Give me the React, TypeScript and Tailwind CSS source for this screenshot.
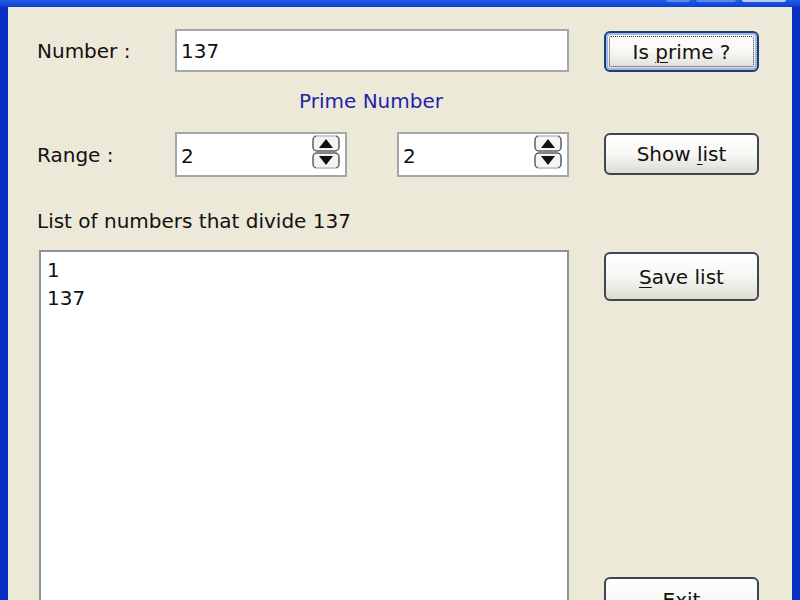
import type { ReactNode } from "react";

// XP-style "prime number" dialog, scaled up.

const FONT = { fontFamily: '"DejaVu Sans", Verdana, sans-serif' };

function XpButton({
  children,
  focused,
  className,
}: {
  children: ReactNode;
  focused?: boolean;
  className: string;
}) {
  return (
    <div
      className={`flex w-[155px] rounded-[6px] border-2 bg-gradient-to-b from-white via-[#f7f7f4] to-[#dedcd2] p-[3px] text-[20px] text-[#111] ${
        focused
          ? "border-[#1d3f74] shadow-[inset_0_0_0_2px_#9db8ea]"
          : "border-[#3d4652]"
      } ${className}`}
    >
      <div
        className={`flex flex-1 items-center justify-center rounded-[2px] border border-dotted ${
          focused ? "border-[#333]" : "border-transparent"
        }`}
      >
        <span className="whitespace-pre">{children}</span>
      </div>
    </div>
  );
}

function SpinArrows() {
  return (
    <svg width="28" height="34" viewBox="0 0 28 34" className="shrink-0">
      <rect x="1" y="1" width="26" height="15" rx="4" fill="#f4f4f2" stroke="#5b5e62" strokeWidth="1.5" />
      <rect x="1" y="18" width="26" height="15" rx="4" fill="#f4f4f2" stroke="#5b5e62" strokeWidth="1.5" />
      <rect x="4" y="0" width="20" height="2" fill="#c9cccf" />
      <rect x="4" y="32" width="20" height="2" fill="#c9cccf" />
      <polygon points="7,13 21,13 14,4" fill="#111" />
      <polygon points="7,21 21,21 14,30" fill="#111" />
    </svg>
  );
}

function Spinner({ value }: { value: string }) {
  return (
    <div className="flex h-[45px] w-[172px] items-start border-2 border-[#a3a6aa] bg-white pr-[5px] pt-[1px]">
      <span className="flex h-[41px] flex-1 items-center pl-[4px] text-[20px] text-[#111]">
        {value}
      </span>
      <SpinArrows />
    </div>
  );
}

export default function App() {
  return (
    <div className="h-[600px] w-[800px] overflow-hidden bg-gradient-to-r from-[#0a2fc4] via-[#0b45dc] to-[#0a2fc4]" style={FONT}>
      {/* title bar remains: bottoms of the caption buttons */}
      <div className="flex h-[7px] items-start justify-end gap-[6px] bg-gradient-to-b from-[#1f5be8] to-[#0b3fd2] pr-[14px]">
        <div className="h-[2px] w-[24px] rounded-b-[2px] bg-[#5d85ea]" />
        <div className="h-[2px] w-[40px] rounded-b-[2px] bg-[#5d85ea]" />
        <div className="h-[2px] w-[44px] rounded-b-[2px] bg-[#b9c8ef]" />
      </div>

      <div className="mx-[8px] h-[593px] overflow-hidden bg-[#ece9d8] pl-[29px] text-[20px] text-[#111]">
        {/* Number row */}
        <div className="mt-[22px] flex items-start">
          <div className="flex w-[532px] items-center">
            <span className="w-[138px]">Number :</span>
            <div className="flex h-[43px] w-[394px] items-center border-2 border-[#a3a6aa] bg-white pl-[4px]">
              137
            </div>
          </div>
          <XpButton focused className="ml-[35px] mt-[2px] h-[41px]">
            Is <span className="underline decoration-1 underline-offset-[3px]">p</span>rime ?
          </XpButton>
        </div>

        {/* status */}
        <div className="mt-[17px] flex w-[532px] pl-[262px] leading-[24px] text-[#2323a8]">
          Prime Number
        </div>

        {/* Range row */}
        <div className="mt-[19px] flex items-start">
          <div className="flex w-[532px] items-center">
            <span className="w-[138px]">Range :</span>
            <Spinner value="2" />
            <div className="w-[50px]" />
            <Spinner value="2" />
          </div>
          <XpButton className="ml-[35px] mt-[1px] h-[42px]">
            Show <span className="underline decoration-1 underline-offset-[3px]">l</span>ist
          </XpButton>
        </div>

        <div className="mt-[32px] leading-[24px]">List of numbers that divide 137</div>

        {/* list + side buttons */}
        <div className="mt-[17px] flex items-start">
          <div className="ml-[2px] h-[360px] w-[530px] border-2 border-[#8e9195] bg-white pl-[6px] pt-[4px] leading-[28px]">
            <div>1</div>
            <div>137</div>
          </div>
          <div className="ml-[35px] flex flex-col">
            <XpButton className="mt-[2px] h-[49px]">
              <span className="underline decoration-1 underline-offset-[3px]">S</span>ave list
            </XpButton>
            <XpButton className="mt-[276px] h-[45px]">
              E<span className="underline decoration-1 underline-offset-[3px]">x</span>it
            </XpButton>
          </div>
        </div>
      </div>
    </div>
  );
}
